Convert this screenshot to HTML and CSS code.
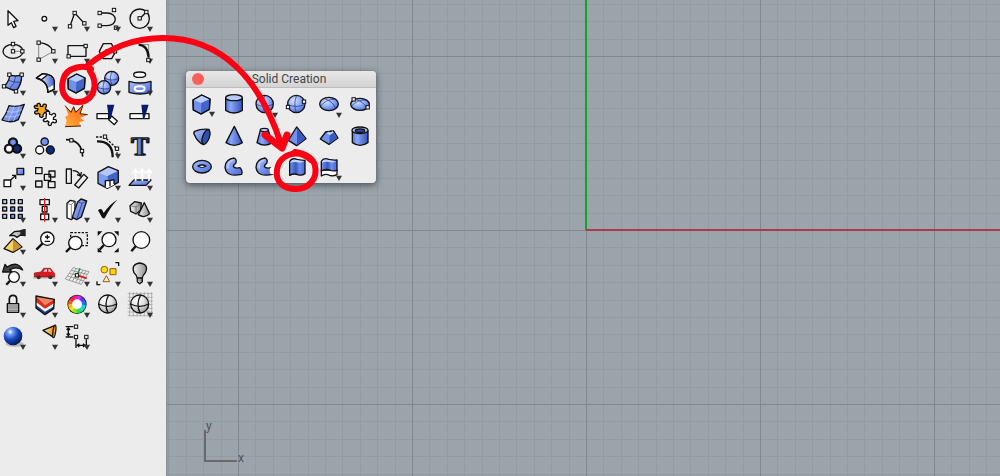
FILE: index.html
```html
<!DOCTYPE html>
<html lang="en">
<head>
<meta charset="utf-8">
<title>Solid Creation</title>
<link rel="stylesheet" href="styles.css">
</head>
<body>
<svg class="defs" aria-hidden="true">
  <defs>
    <linearGradient id="blueV" x1="0" x2="1" y1="0" y2="1"><stop offset="0" stop-color="#a9c0fc"/><stop offset="1" stop-color="#4969d8"/></linearGradient>
    <linearGradient id="tubeBlue" x1="0" x2="1"><stop offset="0" stop-color="#5273dc"/><stop offset=".3" stop-color="#8ba7f8"/><stop offset="1" stop-color="#3352b8"/></linearGradient>
    <linearGradient id="half" x1="0" x2="1"><stop offset="0" stop-color="#dfe7ff"/><stop offset="1" stop-color="#3f60d0"/></linearGradient>
    <linearGradient id="steel" x1="0" x2="1"><stop offset="0" stop-color="#f4f4f4"/><stop offset="1" stop-color="#8c8c8c"/></linearGradient>
    <linearGradient id="wave" x1="0" x2="1"><stop offset="0" stop-color="#7393f3"/><stop offset=".4" stop-color="#3a59c0"/><stop offset=".65" stop-color="#6b8bee"/><stop offset="1" stop-color="#4969d8"/></linearGradient>
    <linearGradient id="fire" x1="1" x2="0" y1="0" y2="1"><stop offset="0" stop-color="#ff5a0a"/><stop offset="1" stop-color="#ffb040"/></linearGradient>
    <linearGradient id="gold" x1="0" x2="1"><stop offset="0" stop-color="#fff0a8"/><stop offset="1" stop-color="#ef8200"/></linearGradient>
    <radialGradient id="ball" cx=".35" cy=".3" r=".8"><stop offset="0" stop-color="#d6e1ff"/><stop offset=".5" stop-color="#8eabf9"/><stop offset="1" stop-color="#4465ce"/></radialGradient>
    <radialGradient id="gray" cx=".35" cy=".3" r=".75"><stop offset="0" stop-color="#fff"/><stop offset=".5" stop-color="#e2e2e2"/><stop offset="1" stop-color="#999"/></radialGradient>
    <radialGradient id="deep" cx=".35" cy=".28" r=".75"><stop offset="0" stop-color="#fff"/><stop offset=".2" stop-color="#6f9df5"/><stop offset=".55" stop-color="#1847bd"/><stop offset="1" stop-color="#041755"/></radialGradient>
    <path id="more" d="M69 74H87L78 90Z" fill="#333"/>
    <rect id="node" x="-5" y="-5" width="10" height="10" fill="#f4f4f4" stroke="#111" stroke-width="3"/>
    <g id="cube" stroke="#111" stroke-width="4" stroke-linejoin="round">
      <path d="M21 39L47 24L72 36L70 67L45 81L22 69Z" fill="#6f90ee"/>
      <path d="M22 39L47 25L71 36L46 48Z" fill="#bccdff" stroke="none"/>
      <path d="M46 48L71 37L69 66L45 80Z" fill="#4463c8" stroke="none"/>
      <path d="M21 39L47 24L72 36L70 67L45 81L22 69Z" fill="none"/>
    </g>
    <pattern id="grid" x="72" y="56" width="174" height="174" patternUnits="userSpaceOnUse">
      <path class="minor" d="M17 0h1v174h-1zM35 0h1v174h-1zM52 0h1v174h-1zM70 0h1v174h-1zM87 0h1v174h-1zM104 0h1v174h-1zM122 0h1v174h-1zM139 0h1v174h-1zM157 0h1v174h-1zM0 17h174v1H0zM0 35h174v1H0zM0 52h174v1H0zM0 70h174v1H0zM0 87h174v1H0zM0 104h174v1H0zM0 122h174v1H0zM0 139h174v1H0zM0 157h174v1H0z"/>
      <path class="major" d="M0 0h1v174H0zM0 0h174v1H0z"/>
    </pattern>
  </defs>
</svg>

<aside class="sidebar">
<div class="tools" role="toolbar" aria-label="Main tools">
<button class="tool" aria-label="Select"><svg viewBox="0 0 96 96"><path class="ln w" d="M33 26V70L43 62L50 77L57 73L50 58L63 56Z"/></svg></button>
<button class="tool" aria-label="Point"><svg viewBox="0 0 96 96"><circle class="ln w" cx="46" cy="50" r="7"/><use href="#more"/></svg></button>
<button class="tool" aria-label="Polyline"><svg viewBox="0 0 96 96"><path class="ln" d="M27 73L41 33L70 64"/><use href="#node" x="27" y="73"/><use href="#node" x="41" y="33"/><use href="#node" x="70" y="64"/><use href="#more"/></svg></button>
<button class="tool" aria-label="Curve"><svg viewBox="0 0 96 96"><path class="ln" d="M23 33H45C78 33 78 71 45 71H23"/><use href="#node" x="23" y="33"/><use href="#node" x="66" y="24"/><use href="#node" x="23" y="71"/><use href="#node" x="72" y="77"/><use href="#more"/></svg></button>
<button class="tool" aria-label="Circle"><svg viewBox="0 0 96 96"><circle class="ln" cx="47" cy="50" r="29"/><path class="ln" d="M47 50L67 30"/><use href="#node" x="47" y="49"/><use href="#node" x="67" y="30"/><use href="#more"/></svg></button>

<button class="tool" aria-label="Ellipse"><svg viewBox="0 0 96 96"><ellipse class="ln" cx="48" cy="52" rx="30" ry="21"/><path class="ln thin" d="M48 30V52H76"/><use href="#node" x="48" y="30"/><use href="#node" x="48" y="52"/><use href="#node" x="76" y="52"/><use href="#more"/></svg></button>
<button class="tool" aria-label="Arc"><svg viewBox="0 0 96 96"><path class="ln thin" d="M29 26V77L73 52"/><path class="ln" d="M29 26Q62 28 73 52"/><use href="#node" x="29" y="26"/><use href="#node" x="29" y="77"/><use href="#node" x="73" y="52"/><use href="#more"/></svg></button>
<button class="tool" aria-label="Rectangle"><svg viewBox="0 0 96 96"><path class="ln" d="M21 35H75V67H21Z"/><use href="#node" x="74" y="36"/><use href="#node" x="23" y="67"/><use href="#more"/></svg></button>
<button class="tool" aria-label="Polygon"><svg viewBox="0 0 96 96"><path class="ln" d="M22 52L34 29H58L71 52L59 74H34Z"/><path class="ln thin" d="M47 52H70"/><use href="#node" x="47" y="52"/><use href="#node" x="69" y="52"/><use href="#more"/></svg></button>
<button class="tool" aria-label="Fillet"><svg viewBox="0 0 96 96"><path class="ln thin" d="M44 32H74V77"/><path class="ln fat" d="M44 32Q71 34 74 70"/><use href="#more"/><use href="#node" x="73" y="78"/></svg></button>

<button class="tool" aria-label="Surface from points"><svg viewBox="0 0 96 96"><path class="ln b" d="M38 26Q55 34 74 26Q75 55 57 75Q40 70 21 61Q38 45 38 26Z"/><path class="ln thin navy" d="M56 30Q55 52 38 68M34 43Q54 50 70 49"/><use href="#node" x="37" y="26"/><use href="#node" x="74" y="26"/><use href="#node" x="21" y="61"/><use href="#node" x="57" y="76"/><use href="#more"/></svg></button>
<button class="tool" aria-label="Sweep"><svg viewBox="0 0 96 96"><path class="ln w" d="M22 36L40 23Q74 24 76 47V70L56 79Q58 46 22 36Z"/><path class="half" d="M37 41L54 28Q73 32 75 48V56L57 66Q56 50 37 41Z"/><path class="ln" d="M22 36L40 23Q74 24 76 47V70L56 79Q58 46 22 36ZM37 41L55 27"/><use href="#more"/></svg></button>
<button class="tool" aria-label="Solid box"><svg viewBox="0 0 96 96"><use href="#cube"/><use href="#more"/></svg></button>
<button class="tool" aria-label="Boolean union"><svg viewBox="0 0 96 96"><circle class="ln ball" cx="59" cy="37" r="21"/><circle class="ln ball" cx="36" cy="64" r="20"/><path class="ln thin navy" d="M38 36Q57 48 80 37M61 16Q50 34 60 57M16 63Q36 74 56 65M37 44Q28 64 37 84"/><use href="#more"/></svg></button>
<button class="tool" aria-label="Project to surface"><svg viewBox="0 0 96 96"><ellipse class="ln w" cx="47" cy="26" rx="18" ry="8"/><path class="ln b" d="M15 46Q47 56 81 46V79Q47 89 15 79Z"/><ellipse cx="47" cy="68" rx="15" ry="7" fill="none" stroke="#fff" stroke-width="6"/><use href="#more"/></svg></button>

<button class="tool" aria-label="Surface edit"><svg viewBox="0 0 96 96"><path class="ln b" d="M36 26Q60 32 82 22Q74 42 64 68Q42 80 15 69Q30 48 36 26Z"/><path d="M51 28Q45 50 33 73M67 27Q60 50 49 73M29 43Q50 50 75 38M22 57Q44 65 70 52" fill="none" stroke="#c9d6ff" stroke-width="2"/><use href="#more"/></svg></button>
<button class="tool" aria-label="Group"><svg viewBox="0 0 96 96"><path class="ln orange" d="M25 28Q22 18 31 19Q36 22 34 28L41 28Q42 19 50 22Q55 26 49 33L51 39Q60 38 58 46Q53 51 47 46L42 54Q44 60 37 61Q29 59 33 52L28 49Q22 54 17 48Q16 40 25 42L27 35Q15 36 16 28Q19 23 25 28Z"/><path class="ln w" d="M52 51Q48 43 57 42Q64 44 61 51L68 54Q73 46 79 51Q82 58 74 61L73 67Q84 66 82 75Q77 80 72 75L67 79Q68 87 60 85Q55 80 60 75L55 71Q49 77 43 71Q43 64 51 64Z"/></svg></button>
<button class="tool" aria-label="Explode"><svg viewBox="0 0 96 96"><path d="M12 26L30 46L38 29L44 46L66 25L57 50L80 53L58 63L70 72L53 76L60 87L12 89L17 70L12 60L22 54Z" fill="url(#fire)"/><path d="M12 26L30 46L38 29L44 46L66 25L57 50L80 53M12 89L60 87" fill="none" stroke="#4a1c00" stroke-width="3"/></svg></button>
<button class="tool" aria-label="Split"><svg viewBox="0 0 96 96"><path class="ln w" d="M15 50H50V65H15Z"/><path class="ln w" d="M59 57L76 72L67 83L50 68Z"/><path d="M45 23H67L56 66H51Z" fill="#071b6d"/></svg></button>
<button class="tool" aria-label="Trim"><svg viewBox="0 0 96 96"><path class="ln w" d="M18 50H75V65H18Z"/><path d="M52 23H74L61 65H57Z" fill="#071b6d"/></svg></button>

<button class="tool" aria-label="Join"><svg viewBox="0 0 96 96"><circle class="ln fat mid-blue" cx="48" cy="40" r="12"/><circle class="ln fat deep-blue" cx="60" cy="59" r="12"/><circle class="ln fat w" cx="36" cy="59" r="12"/><use href="#more"/></svg></button>
<button class="tool" aria-label="Ungroup"><svg viewBox="0 0 96 96"><circle class="ln mid-blue" cx="47" cy="38" r="11"/><circle class="ln w" cx="32" cy="63" r="12"/><circle class="ln deep-blue" cx="64" cy="63" r="12"/></svg></button>
<button class="tool" aria-label="Edit points"><svg viewBox="0 0 96 96"><path class="ln mid" d="M15 32Q62 32 65 83"/><use href="#node" x="31" y="34"/><use href="#node" x="63" y="66"/></svg></button>
<button class="tool" aria-label="Control points"><svg viewBox="0 0 96 96"><path class="ln fat" d="M15 37Q62 36 62 85"/><path class="ln dash" d="M12 24H38L75 59V82"/><use href="#more"/><use href="#node" x="39" y="23"/><use href="#node" x="75" y="59"/></svg></button>
<button class="tool" aria-label="Text"><svg viewBox="0 0 96 96"><text class="letter shade" x="50" y="79">T</text><text class="letter" x="46" y="77">T</text></svg></button>

<button class="tool" aria-label="Move"><svg viewBox="0 0 96 96"><path class="ln w" d="M21 57H41V77H21Z"/><path class="ln b" d="M60 22H80V41H60Z"/><path class="ln" d="M41 57L55 44M45 43H56V54"/><use href="#more"/></svg></button>
<button class="tool" aria-label="Copy"><svg viewBox="0 0 96 96"><path class="ln" d="M20 20H39V38H20ZM20 60H39V78H20ZM46 40H65V58H46ZM60 30H78V48H60ZM58 62H78V80H58Z"/></svg></button>
<button class="tool" aria-label="Rotate"><svg viewBox="0 0 96 96"><path class="ln" d="M16 24H31V67H16ZM35 29Q52 29 58 44M48 41L59 45L61 33M41 72L68 40L80 50L53 81Z"/></svg></button>
<button class="tool" aria-label="Solid tools"><svg viewBox="0 0 96 96"><path d="M18 34L46 45V80L18 67Z" fill="#7d9cf4"/><path d="M18 34L49 17L79 29L46 45Z" fill="#b3c6ff"/><path d="M46 45L79 29V64L46 80Z" fill="#4263c6"/><path class="ln" d="M18 34L49 17L79 29V64L46 82L18 67Z"/><path class="w" d="M40 59L66 57V71L46 82L40 78Z"/><path class="ln" d="M40 77V59H54L66 56V69M54 59V76"/><use href="#more"/></svg></button>
<button class="tool" aria-label="Extrude"><svg viewBox="0 0 96 96"><path class="ln b" d="M15 73L30 57H81L66 73Z"/><path d="M35 60V28M26 37L35 26L44 37M55 60V28M46 37L55 26L64 37M75 60V28M66 37L75 26L84 37" fill="none" stroke="#fff" stroke-width="5"/><use href="#more"/></svg></button>

<button class="tool" aria-label="Array"><svg viewBox="0 0 96 96"><path class="ln pale" d="M17 20H29V32H17ZM41 20H53V32H41ZM64 20H76V32H64ZM17 42H29V54H17ZM17 64H29V76H17Z"/><path class="ln mid-blue" d="M41 42H53V54H41ZM64 42H76V54H64ZM41 64H53V76H41ZM64 64H76V76H64Z"/><use href="#more"/></svg></button>
<button class="tool" aria-label="Align"><svg viewBox="0 0 96 96"><path class="ln w" d="M33 20H61V35H33ZM40 40H54V57H40ZM35 63H59V80H35Z"/><path d="M47 15V86" stroke="#e01b1b" stroke-width="4"/><use href="#more"/></svg></button>
<button class="tool" aria-label="Orient"><svg viewBox="0 0 96 96"><path class="ln w" d="M18 31L28 22L42 25V70L31 80L18 75Z"/><path class="ln thin" d="M18 31L31 35L40 26M31 35V79"/><path class="ln b" d="M50 27L60 18L77 24L61 72L47 80L34 73Z"/><path class="ln thin navy" d="M50 27L63 31L77 24M63 31L47 80"/><use href="#more"/></svg></button>
<button class="tool" aria-label="Check"><svg viewBox="0 0 96 96"><path d="M18 52Q27 44 31 52L35 60Q52 34 76 20Q55 42 38 76Q30 78 28 70Z" fill="#111"/><use href="#more"/></svg></button>
<button class="tool" aria-label="Mesh"><svg viewBox="0 0 96 96"><path class="ln steel" d="M18 38L32 26L52 30L50 52L36 63L20 55Z"/><path class="ln thin" d="M18 38L36 42L52 30M36 42V63"/><path class="ln steel" d="M61 29L77 62Q62 78 43 65Z"/><use href="#more"/></svg></button>

<button class="tool" aria-label="Block"><svg viewBox="0 0 96 96"><path class="ln sand" d="M48 41L21 71L48 82L75 66Z"/><path d="M48 43V80L73 65Z" fill="#c99234"/><path class="ln steel" d="M38 32L52 20L69 18L84 14V32L70 30L60 37L51 31Z"/><path d="M70 16L84 13V33L70 30Z" fill="#222"/><use href="#more"/></svg></button>
<button class="tool" aria-label="Zoom dynamic"><svg viewBox="0 0 96 96"><circle class="ln w" cx="55" cy="41" r="20"/><path class="ln fat" d="M40 56L22 74"/><path class="ln" d="M55 29V43M48 36H62M47 49H63"/></svg></button>
<button class="tool" aria-label="Zoom window"><svg viewBox="0 0 96 96"><path class="ln dash" d="M29 23H79V62H29Z"/><circle class="ln w" cx="43" cy="54" r="20"/><path class="ln fat" d="M28 68L15 81"/></svg></button>
<button class="tool" aria-label="Zoom extents"><svg viewBox="0 0 96 96"><path d="M17 19H31L17 33ZM80 19V33L66 19ZM17 82V68L31 82ZM80 82H66L80 68Z" fill="#111"/><circle class="ln w" cx="51" cy="44" r="21"/><path class="ln fat" d="M36 60L23 74"/></svg></button>
<button class="tool" aria-label="Zoom selected"><svg viewBox="0 0 96 96"><circle class="ln w" cx="52" cy="45" r="25"/><path class="ln fat" d="M35 64L22 79"/></svg></button>

<button class="tool" aria-label="Undo view"><svg viewBox="0 0 96 96"><path class="ln charcoal" d="M17 45L24 22L30 30Q62 10 77 39Q57 27 39 38L45 45Z"/><circle class="ln w" cx="51" cy="60" r="16"/><path class="ln fat" d="M39 71L28 83"/><use href="#more"/></svg></button>
<button class="tool" aria-label="Named views"><svg viewBox="0 0 96 96"><path d="M12 63H80" stroke="#999" stroke-width="2"/><path d="M16 48L36 45L44 34H64L73 45L77 50V60H16Z" fill="#dc1920" stroke="#86090d" stroke-width="2"/><path d="M43 44L48 37H54V44ZM58 37H63L68 44H58Z" fill="#f8caca"/><circle cx="29" cy="61" r="6" fill="#333"/><circle cx="64" cy="61" r="6" fill="#333"/><use href="#more"/></svg></button>
<button class="tool" aria-label="Construction plane"><svg viewBox="0 0 96 96"><path d="M36 32L84 44L61 82L13 66ZM46 35L24 70M56 37L34 73M66 40L44 76M75 42L53 79M31 40L79 52M25 49L74 61M19 57L68 72" fill="none" stroke="#777" stroke-width="2"/><path d="M49 54L57 34" stroke="#079b32" stroke-width="4"/><path d="M49 55L77 64" stroke="#e31a1a" stroke-width="5"/><use href="#node" x="48" y="55"/><use href="#more"/></svg></button>
<button class="tool" aria-label="Object snap"><svg viewBox="0 0 96 96"><g stroke="#9b5b00" stroke-width="3"><circle cx="37" cy="38" r="10" fill="#ffdd13"/><path d="M54 35H72V53H54Z" fill="#ffd40e"/><path d="M43 56L53 74H33Z" fill="#f8efdf"/></g><path class="ln" d="M70 17H80V27M15 73V83H25"/><use href="#more"/></svg></button>
<button class="tool" aria-label="Hide objects"><svg viewBox="0 0 96 96"><path class="ln steel" d="M40 64Q39 55 30 47Q20 22 47 18Q76 22 64 47Q55 55 55 64Z"/><path class="ln steel" d="M40 63H55V74L47 80L40 74Z"/><path class="ln thin" d="M40 69H55"/><use href="#more"/></svg></button>

<button class="tool" aria-label="Lock"><svg viewBox="0 0 96 96"><path class="ln mid" d="M37 47V32Q38 22 48 22Q58 22 59 32V47"/><path class="ln silver" d="M31 47H65V73H31Z"/><path class="ln thin" d="M33 54H63M33 60H63M33 67H63"/><use href="#more"/></svg></button>
<button class="tool" aria-label="Layers"><svg viewBox="0 0 96 96"><path d="M21 50L48 68L75 54V63L48 80L21 60Z" fill="#173a9c"/><path d="M21 40L48 60L75 45V55L48 71L21 51Z" fill="#f4f4f4"/><path d="M21 24L48 50L76 34V45L48 62L21 42Z" fill="#d92e1c"/><path d="M21 24L76 34L48 51Z" fill="#f4835f"/><path class="ln" d="M21 24L76 34L74 62L48 80L21 60Z"/><use href="#more"/></svg></button>
<button class="tool" aria-label="Display color"><svg viewBox="0 0 96 96"><circle cx="48" cy="49" r="29" fill="#222"/><g fill="none" stroke-width="13"><circle class="hue h1" pathLength="12" cx="48" cy="49" r="20"/><circle class="hue h2" pathLength="12" cx="48" cy="49" r="20"/><circle class="hue h3" pathLength="12" cx="48" cy="49" r="20"/><circle class="hue h4" pathLength="12" cx="48" cy="49" r="20"/><circle class="hue h5" pathLength="12" cx="48" cy="49" r="20"/><circle class="hue h6" pathLength="12" cx="48" cy="49" r="20"/><circle class="hue h7" pathLength="12" cx="48" cy="49" r="20"/><circle class="hue h8" pathLength="12" cx="48" cy="49" r="20"/><circle class="hue h9" pathLength="12" cx="48" cy="49" r="20"/><circle class="hue h10" pathLength="12" cx="48" cy="49" r="20"/><circle class="hue h11" pathLength="12" cx="48" cy="49" r="20"/><circle class="hue h12" pathLength="12" cx="48" cy="49" r="20"/></g><circle class="w" cx="48" cy="49" r="15"/><use href="#more"/></svg></button>
<button class="tool" aria-label="Shade"><svg viewBox="0 0 96 96"><circle class="ln gray" cx="47" cy="48" r="27"/><path class="ln" d="M20 48Q47 62 74 48M50 21Q35 48 48 75"/></svg></button>
<button class="tool" aria-label="Render preview"><svg viewBox="0 0 96 96"><path d="M17 12V85M28 12V85M39 12V85M50 12V85M61 12V85M72 12V85M83 12V85M11 17H86M11 28H86M11 39H86M11 50H86M11 61H86M11 72H86M11 83H86" stroke="#999" stroke-width="2"/><circle class="ln gray" cx="47" cy="48" r="27"/><path class="ln" d="M20 48Q47 62 74 48M50 21Q35 48 48 75"/><use href="#more"/></svg></button>

<button class="tool" aria-label="Render"><svg viewBox="0 0 96 96"><ellipse cx="53" cy="72" rx="27" ry="9" fill="#bbb"/><circle cx="48" cy="48" r="28" fill="url(#deep)"/><use href="#more"/></svg></button>
<button class="tool" aria-label="Spotlight"><svg viewBox="0 0 96 96"><path class="ln gold" d="M42 31L78 16L74 52Z"/><ellipse class="ln amber" cx="76" cy="34" rx="4" ry="19" transform="rotate(8 76 34)"/><use href="#more"/></svg></button>
<button class="tool" aria-label="Dimension"><svg viewBox="0 0 96 96"><path class="ln" d="M14 20H37M14 51H37M22 24V47M17 30L22 24L27 30M17 41L22 47L27 41M45 58V84M76 58V84M49 76H72M55 71L49 76L55 81M66 71L72 76L66 81"/><use href="#node" x="45" y="20"/><use href="#node" x="45" y="51"/><use href="#node" x="76" y="51"/><use href="#more"/></svg></button>
</div>
</aside>

<main class="viewport">
  <svg class="plane" aria-hidden="true">
    <rect width="100%" height="100%" fill="url(#grid)"/>
    <path d="M420 0V230" stroke="#0ba62b" stroke-width="2"/>
    <path d="M420 230H4000" stroke="#ab3a46" stroke-width="2"/>
  </svg>
  <svg class="axes" viewBox="0 0 46 46" role="img" aria-label="Axis directions">
    <path d="M5 13V44H37" fill="none" stroke="#666a70" stroke-width="2"/>
    <text x="6" y="13">y</text><text x="38" y="45">x</text>
  </svg>

  <section class="palette" aria-labelledby="palette-title">
    <header class="titlebar"><button class="close" aria-label="Close"></button><h1 class="title" id="palette-title">Solid Creation</h1></header>
    <div class="solids" role="toolbar" aria-labelledby="palette-title">
<button class="tool" aria-label="Box"><svg viewBox="0 3 96 96"><use href="#cube"/><use href="#more"/></svg></button>
<button class="tool" aria-label="Cylinder"><svg viewBox="0 0 96 96"><path class="ln tube" d="M23 29V67Q48 83 73 67V29"/><ellipse class="ln ice" cx="48" cy="29" rx="25" ry="9"/></svg></button>
<button class="tool" aria-label="Sphere"><svg viewBox="0 0 96 96"><circle class="ln ball" cx="47" cy="48" r="26"/><path class="ln thin navy" d="M22 49Q47 61 72 49M48 22Q36 48 47 73"/><use href="#more"/></svg></button>
<button class="tool" aria-label="Sphere by diameter"><svg viewBox="0 0 96 96"><circle class="ln ball" cx="46" cy="48" r="26"/><path class="ln thin navy" d="M21 50Q47 61 72 49M47 22Q36 48 46 73"/><use href="#node" x="69" y="41"/><use href="#node" x="21" y="57"/></svg></button>
<button class="tool" aria-label="Ellipsoid"><svg viewBox="0 0 96 96"><ellipse class="ln ball" cx="48" cy="48" rx="28" ry="20"/><path class="ln thin navy" d="M23 54Q40 32 68 34M33 32Q59 39 68 61"/><use href="#more"/></svg></button>
<button class="tool" aria-label="Ellipsoid by corners"><svg viewBox="0 0 96 96"><ellipse class="ln ball" cx="48" cy="49" rx="28" ry="18"/><path class="ln thin navy" d="M23 54Q40 34 68 36M33 34Q59 40 68 61"/><use href="#node" x="29" y="34"/><use href="#node" x="71" y="58"/></svg></button>

<button class="tool" aria-label="Paraboloid"><svg viewBox="0 0 96 96"><path class="ln b" d="M69 28Q44 26 26 34Q21 39 26 46Q34 66 52 74Q70 62 69 28Z"/><ellipse class="ln royal" cx="60" cy="51" rx="10" ry="23" transform="rotate(20 60 51)"/></svg></button>
<button class="tool" aria-label="Cone"><svg viewBox="0 0 96 96"><path class="ln tube" d="M49 19L73 68Q49 84 24 68Z"/></svg></button>
<button class="tool" aria-label="Truncated cone"><svg viewBox="0 0 96 96"><path class="ln tube" d="M34 31L24 68Q47 83 70 68L58 31Z"/><ellipse class="ln ice" cx="46" cy="30" rx="12" ry="5"/></svg></button>
<button class="tool" aria-label="Pyramid"><svg viewBox="0 0 96 96"><path class="ln mid-blue" d="M47 21L22 61L47 77L75 56Z"/><path d="M48 25V75L73 56Z" fill="#3a59bf"/></svg></button>
<button class="tool" aria-label="Truncated pyramid"><svg viewBox="0 0 96 96"><path class="ln mid-blue" d="M22 57L38 36L62 33L75 54L48 73Z"/><path d="M50 45L62 36L73 54L49 71Z" fill="#3a59bf"/><path d="M38 37L60 34L62 37L50 46Z" fill="#c4d2ff"/><path class="ln dash" d="M38 36L62 33"/></svg></button>
<button class="tool" aria-label="Tube"><svg viewBox="0 0 96 96"><path class="ln tube" d="M25 31V68Q48 84 72 68V31"/><ellipse class="ln ice" cx="48" cy="31" rx="24" ry="10"/><ellipse class="ln royal" cx="48" cy="32" rx="14" ry="5"/></svg></button>

<button class="tool" aria-label="Torus"><svg viewBox="0 0 96 96"><ellipse class="ln b" cx="48" cy="47" rx="28" ry="19"/><path class="ln royal" d="M36 45Q48 38 60 45Q48 53 36 45Z"/><path d="M40 46Q48 43 56 46Q48 51 40 46Z" fill="#eee"/></svg></button>
<button class="tool" aria-label="Pipe"><svg viewBox="0 0 96 96"><path class="ln b" d="M48 21Q21 25 21 49Q25 80 71 70Q75 60 66 50Q50 54 46 46Q46 41 53 37Q58 26 48 21Z"/><path d="M44 28Q28 34 30 50" fill="none" stroke="#bccdff" stroke-width="5" stroke-linecap="round"/></svg></button>
<button class="tool" aria-label="Pipe with caps"><svg viewBox="0 0 96 96"><path class="ln b" d="M48 21Q21 25 21 49Q25 80 71 70Q75 60 66 50Q50 54 46 46Q46 41 53 37Q58 26 48 21Z"/><path d="M44 28Q28 34 30 50" fill="none" stroke="#bccdff" stroke-width="5" stroke-linecap="round"/><ellipse class="w" cx="70" cy="59" rx="8" ry="11"/></svg></button>
<button class="tool" aria-label="Extrude closed curve"><svg viewBox="0 0 96 96"><path class="ln wave" d="M26 32Q33 19 48 25Q60 28 72 28V68Q62 75 50 71Q38 66 26 73Z"/><path d="M28 32Q35 22 48 27Q60 30 70 30Q60 38 48 34Q38 31 28 35Z" fill="#c4d2ff"/></svg></button>
<button class="tool" aria-label="Extrude surface"><svg viewBox="0 0 96 96"><path class="ln w" d="M25 57V75Q37 66 50 73Q61 77 72 71V57Z"/><path class="ln wave" d="M25 31Q32 19 47 25Q60 28 72 27V58Q62 62 50 57Q38 53 25 60Z"/><path d="M27 31Q35 22 47 27Q60 30 70 30Q60 37 48 33Q38 31 27 35Z" fill="#c4d2ff"/><use href="#more"/></svg></button>
    </div>
  </section>
</main>

<svg class="marks" viewBox="0 0 340 210" aria-hidden="true">
  <path d="M91 69C85 65 66 66 63 80C59 95 69 103 79 102C94 101 99 84 90 71"/>
  <path d="M88 65C112 46 138 38 163 38C222 38 260 79 281 144"/>
  <path class="head" d="M265 135L282 148L287 135"/>
  <path d="M311 160C298 148 279 154 277 170C275 183 285 189 296 189C309 189 318 178 315 166C314 159 305 153 295 152"/>
</svg>
</body>
</html>
```
FILE: styles.css
```css
* { box-sizing: border-box; }

body {
  display: flex;
  position: relative;
  margin: 0;
  min-height: 100vh;
  background: #9ba3ab;
  font-family: Roboto, Inter, sans-serif;
}

.defs { position: absolute; width: 0; height: 0; }

button {
  padding: 0;
  border: 0;
  background: none;
}

.sidebar {
  flex: 0 0 166px;
  padding: 2px 8px 0 0;
  background: #ececec;
  box-shadow: 1px 0 2px #858b92;
  z-index: 1;
}

.tools {
  display: grid;
  grid-template-columns: repeat(5, 1fr);
  grid-auto-rows: 1fr;
  height: 350px;
  margin-left: -3px;
  margin-right: 2px;
}

.tool {
  display: grid;
  place-items: center;
  min-width: 0;
  min-height: 0;
}

.tool svg { width: 32px; height: 32px; overflow: visible; }

/* Strokes */
.ln { fill: none; stroke: #111; stroke-width: 4; stroke-linejoin: round; }
.mid { stroke-width: 5; }
.fat { stroke-width: 7; }
.thin { stroke-width: 2; stroke: #555; }
.navy { stroke: #172b68; }
.dash { stroke-dasharray: 7 4; }

/* Fills */
.w { fill: #fff; }
.b { fill: url(#blueV); }
.tube { fill: url(#tubeBlue); }
.half { fill: url(#half); }
.wave { fill: url(#wave); }
.ball { fill: url(#ball); }
.gray { fill: url(#gray); }
.steel { fill: url(#steel); }
.gold { fill: url(#gold); }
.orange { fill: #f9a41d; }
.amber { fill: #f5a21b; }
.sand { fill: #f7d267; }
.silver { fill: #c4c4c4; }
.charcoal { fill: #444; }
.ice { fill: #b7c9ff; }
.pale { fill: #b9c9fb; }
.mid-blue { fill: #7190ef; }
.deep-blue { fill: #102b7d; }
.royal { fill: #3150a8; }

.letter {
  fill: #6384e6;
  stroke: #111;
  stroke-width: 3;
  font: bold 78px "Liberation Serif", serif;
  text-anchor: middle;
}
.shade { fill: #263f92; }

.hue { stroke-dasharray: 1.1 10.9; }
.h1 { stroke: #1cc8f0; stroke-dashoffset: 0; }
.h2 { stroke: #2170ff; stroke-dashoffset: 1; }
.h3 { stroke: #5a35f5; stroke-dashoffset: 2; }
.h4 { stroke: #c22cf0; stroke-dashoffset: 3; }
.h5 { stroke: #f51ca0; stroke-dashoffset: 4; }
.h6 { stroke: #ff1c2f; stroke-dashoffset: 5; }
.h7 { stroke: #ff5a1a; stroke-dashoffset: 6; }
.h8 { stroke: #ffb01a; stroke-dashoffset: 7; }
.h9 { stroke: #e8e81c; stroke-dashoffset: 8; }
.h10 { stroke: #8be81c; stroke-dashoffset: 9; }
.h11 { stroke: #2ee04a; stroke-dashoffset: 10; }
.h12 { stroke: #1fe0b0; stroke-dashoffset: 11; }

.viewport {
  position: relative;
  flex: 1;
  min-width: 0;
  overflow: hidden;
}

.plane {
  position: absolute;
  inset: 0;
  width: 100%;
  height: 100%;
}
.minor { fill: #929aa2; }
.major { fill: #7f878f; }

.axes {
  position: absolute;
  left: 34px;
  bottom: 13px;
  width: 46px;
  height: 46px;
  overflow: visible;
  fill: #50545a;
  font-size: 12px;
}

.palette {
  position: absolute;
  left: 20px;
  top: 71px;
  width: 190px;
  border-radius: 4px;
  background: #ececec;
  box-shadow: 0 2px 7px #4b5157, 0 0 1px #555;
}

.titlebar {
  display: flex;
  align-items: center;
  height: 17px;
  padding: 0 10px 0 6px;
  border-bottom: 1px solid #bcbcbc;
  border-radius: 4px 4px 0 0;
  background: linear-gradient(#e8e8e8, #d3d3d3);
}

.close {
  width: 12px;
  height: 12px;
  border-radius: 50%;
  background: #fb5f5b;
}

.title {
  flex: 1;
  margin: 0;
  padding-left: 8px;
  color: #444;
  font-size: 12px;
  font-weight: 400;
  line-height: 16px;
  text-align: center;
}

.solids {
  display: grid;
  grid-template-columns: repeat(6, 1fr);
  grid-auto-rows: 1fr;
  height: 95px;
}

.marks {
  position: absolute;
  left: 0;
  top: 0;
  z-index: 2;
  width: 340px;
  height: 210px;
  fill: none;
  stroke: #fd0013;
  stroke-width: 6;
  stroke-linecap: round;
  stroke-linejoin: round;
  pointer-events: none;
}
.head { stroke-width: 7; }
```
